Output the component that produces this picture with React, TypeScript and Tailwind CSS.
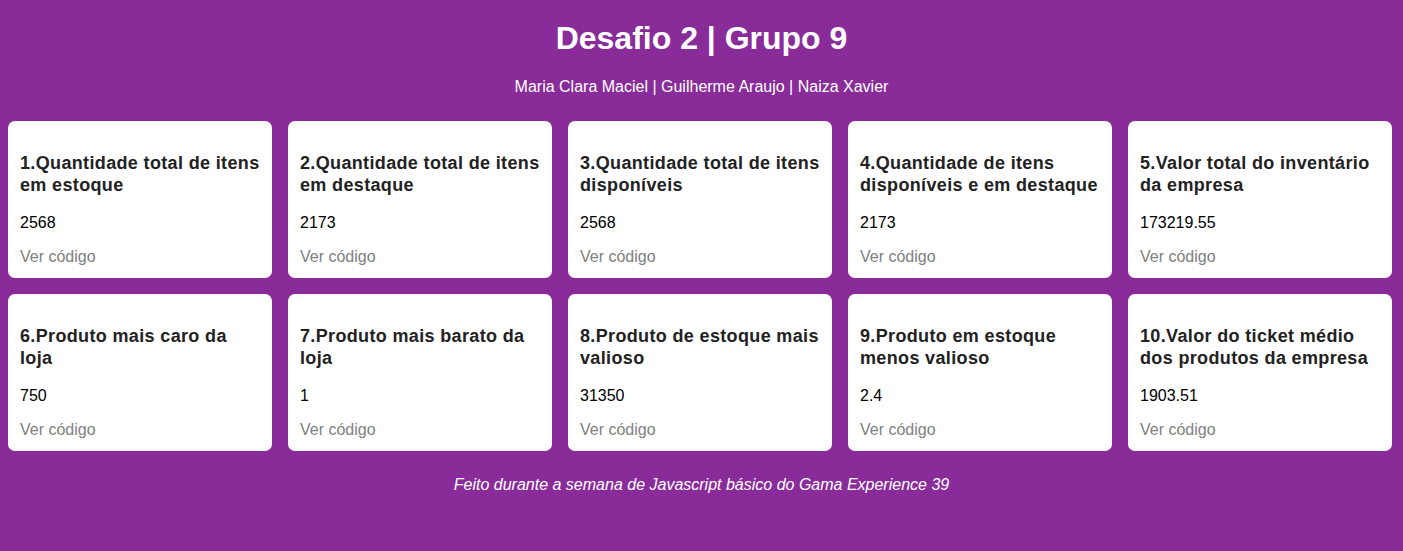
const cards = [
  { title: "1.Quantidade total de itens em estoque", value: "2568" },
  { title: "2.Quantidade total de itens em destaque", value: "2173" },
  { title: "3.Quantidade total de itens disponíveis", value: "2568" },
  { title: "4.Quantidade de itens disponíveis e em destaque", value: "2173" },
  { title: "5.Valor total do inventário da empresa", value: "173219.55" },
  { title: "6.Produto mais caro da loja", value: "750" },
  { title: "7.Produto mais barato da loja", value: "1" },
  { title: "8.Produto de estoque mais valioso", value: "31350" },
  { title: "9.Produto em estoque menos valioso", value: "2.4" },
  { title: "10.Valor do ticket médio dos produtos da empresa", value: "1903.51" },
];

export default function App() {
  return (
    <div className="min-h-[551px] w-full bg-[#892c9a] font-['Liberation_Sans',Arial,sans-serif] text-white">
      <h1 className="pt-[20px] text-center text-[32px] font-bold leading-[37px]">
        Desafio 2 | Grupo 9
      </h1>
      <p className="mt-[21px] text-center text-[16px] leading-[18px]">
        Maria Clara Maciel | Guilherme Araujo | Naiza Xavier
      </p>

      {/* cards */}
      <div className="mt-[25px] grid grid-cols-[repeat(5,264px)] gap-x-[16px] gap-y-[16px] px-[8px]">
        {cards.map((c) => (
          <div key={c.title} className="flex h-[157px] flex-col rounded-[7px] bg-white px-[12px] pt-[31px] pb-[12px]">
            <h3 className="text-[18px] font-bold leading-[22px] tracking-[0.35px] text-[#222]">{c.title}</h3>
            <p className="mt-[18px] text-[16px] leading-[18px] text-black">{c.value}</p>
            <a className="mt-[16px] cursor-pointer text-[16px] leading-[18px] text-[#808080]">Ver código</a>
          </div>
        ))}
      </div>

      <p className="mt-[25px] text-center text-[16px] italic leading-[18px]">
        Feito durante a semana de Javascript básico do Gama Experience 39
      </p>
    </div>
  );
}
